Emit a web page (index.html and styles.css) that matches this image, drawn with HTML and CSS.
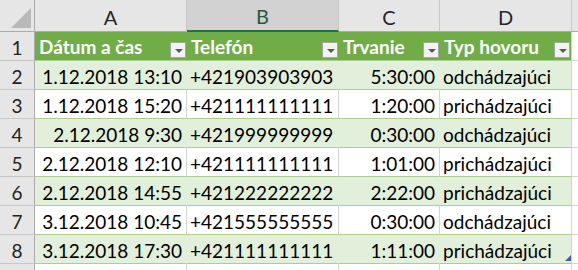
FILE: index.html
```html
<!DOCTYPE html>
<html lang="sk">
<head>
<meta charset="utf-8">
<link rel="stylesheet" href="styles.css">
</head>
<body>
<div class="sheet">
  <div class="ch corner"><span class="tri"></span></div>
  <div class="ch">A</div>
  <div class="ch sel">B</div>
  <div class="ch">C</div>
  <div class="ch">D</div>
  <div class="ch rest"></div>

  <div class="rh">1</div>
  <div class="th"><span>Dátum a čas</span><span class="fb"></span></div>
  <div class="th"><span>Telefón</span><span class="fb"></span></div>
  <div class="th"><span>Trvanie</span><span class="fb"></span></div>
  <div class="th last"><span>Typ hovoru</span><span class="fb"></span></div>
  <div class="ex"></div>

  <div class="rh">2</div>
  <div class="td band r">1.12.2018 13:10</div>
  <div class="td band">+421903903903</div>
  <div class="td band r">5:30:00</div>
  <div class="td band last">odchádzajúci</div>
  <div class="ex"></div>

  <div class="rh">3</div>
  <div class="td r">1.12.2018 15:20</div>
  <div class="td">+421111111111</div>
  <div class="td r">1:20:00</div>
  <div class="td last">prichádzajúci</div>
  <div class="ex"></div>

  <div class="rh">4</div>
  <div class="td band r">2.12.2018 9:30</div>
  <div class="td band">+421999999999</div>
  <div class="td band r">0:30:00</div>
  <div class="td band last">odchádzajúci</div>
  <div class="ex"></div>

  <div class="rh">5</div>
  <div class="td r">2.12.2018 12:10</div>
  <div class="td">+421111111111</div>
  <div class="td r">1:01:00</div>
  <div class="td last">prichádzajúci</div>
  <div class="ex"></div>

  <div class="rh">6</div>
  <div class="td band r">2.12.2018 14:55</div>
  <div class="td band">+421222222222</div>
  <div class="td band r">2:22:00</div>
  <div class="td band last">prichádzajúci</div>
  <div class="ex"></div>

  <div class="rh">7</div>
  <div class="td r">3.12.2018 10:45</div>
  <div class="td">+421555555555</div>
  <div class="td r">0:30:00</div>
  <div class="td last">odchádzajúci</div>
  <div class="ex"></div>

  <div class="rh">8</div>
  <div class="td band r">3.12.2018 17:30</div>
  <div class="td band">+421111111111</div>
  <div class="td band r">1:11:00</div>
  <div class="td band last end">prichádzajúci<span class="handle"></span></div>
  <div class="ex"></div>

  <div class="rh"></div>
  <div class="td plain"></div>
  <div class="td plain"></div>
  <div class="td plain"></div>
  <div class="td plain last"></div>
  <div class="ex"></div>
</div>
</body>
</html>
```

FILE: styles.css
```css
html, body {
  margin: 0;
  padding: 0;
  background: #ffffff;
  overflow: hidden;
}

.sheet {
  display: grid;
  grid-template-columns: 35px 152px 152px 101px 132px 6px;
  grid-template-rows: 32px repeat(9, 29px);
  width: 578px;
  height: 270px;
  overflow: hidden;
  font-family: Lato, "Liberation Sans", sans-serif;
  font-size: 19px;
  color: #000;
}

.sheet > div {
  box-sizing: border-box;
  white-space: nowrap;
  overflow: hidden;
}

/* column headers */
.ch {
  background: #e6e6e6;
  border-right: 1px solid #c8c8c8;
  border-bottom: 1px solid #ababab;
  display: flex;
  align-items: center;
  justify-content: center;
  color: #262626;
  font-size: 20px;
  padding-top: 2px;
}
.ch.sel {
  background: #d2d2d2;
  border-bottom: 2px solid #217346;
  color: #1e5c3a;
}
.ch.rest {
  border-right: none;
}
.ch.corner {
  position: relative;
  border-right: 1px solid #ababab;
}
.tri {
  position: absolute;
  right: 3px;
  bottom: 3px;
  width: 20px;
  height: 20px;
  background: #b9b9b9;
  clip-path: polygon(100% 0, 100% 100%, 0 100%);
}

/* row headers */
.rh {
  background: #e6e6e6;
  border-right: 1px solid #ababab;
  border-bottom: 1px solid #c8c8c8;
  display: flex;
  align-items: center;
  justify-content: center;
  color: #222;
  padding-top: 2px;
}

/* table header row */
.th {
  background: #70ad47;
  border-bottom: 1px solid #a9d08e;
  color: #ffffff;
  font-weight: bold;
  display: flex;
  align-items: center;
  justify-content: space-between;
  padding-left: 4px;
  padding-right: 1px;
  padding-top: 1px;
}
.th.last {
  border-right: 1px solid #d4d4d4;
}
.fb {
  align-self: flex-end;
  margin-bottom: 2px;
  width: 16px;
  height: 16px;
  box-sizing: border-box;
  border: 1px solid #a6a6a6;
  background: #f3f3f3;
  position: relative;
  flex: none;
}
.fb::after {
  content: "";
  position: absolute;
  left: 4px;
  top: 6px;
  border-left: 4px solid transparent;
  border-right: 4px solid transparent;
  border-top: 4px solid #5a5a5a;
}

/* data cells */
.td {
  background: #ffffff;
  border-right: 1px solid #d4d4d4;
  border-bottom: 1px solid #a9d08e;
  display: flex;
  align-items: center;
  padding: 2px 4px 0 3px;
}
.td.band {
  background: #e2efda;
  border-right-color: #e2efda;
}
.td.last {
  border-right-color: #d4d4d4;
}
.td.r {
  justify-content: flex-end;
}
.td.plain {
  border-bottom-color: #d4d4d4;
}
.td.end {
  position: relative;
}
.handle {
  position: absolute;
  right: 0;
  bottom: 2px;
  width: 6px;
  height: 6px;
  background: #3f5bb5;
  clip-path: polygon(100% 0, 100% 100%, 0 100%);
}

.ex {
  background: #ffffff;
  border-bottom: 1px solid #d4d4d4;
}
```
